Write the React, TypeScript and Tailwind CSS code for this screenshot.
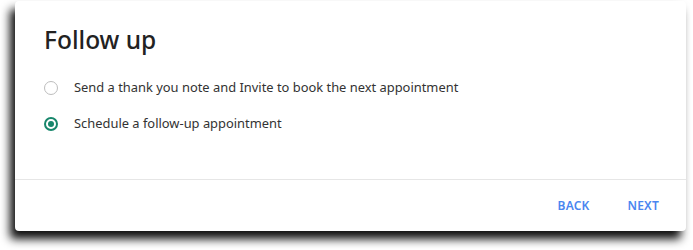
import React from "react";

function Radio({ checked }: { checked: boolean }) {
  return checked ? (
    <span className="flex h-[14px] w-[14px] items-center justify-center rounded-full border-2 border-[#17866b]">
      <span className="h-[6px] w-[6px] rounded-full bg-[#17866b]" />
    </span>
  ) : (
    <span className="h-[14px] w-[14px] rounded-full border-[1.5px] border-[#bdbdbd]" />
  );
}

export default function App() {
  return (
    <div className="h-[250px] w-[693px] overflow-hidden bg-white" style={{ fontFamily: '"Noto Sans", "Open Sans", sans-serif' }}>
      <div className="ml-[15px] mt-[1px] flex h-[230px] w-[671px] flex-col rounded-[4px] bg-white shadow-[-5px_8px_10px_rgba(0,0,0,0.95)]">
        <div className="px-[29px] pt-[23px]">
          <h1 className="text-[24.5px] leading-[32px] font-medium text-[#222]">Follow up</h1>
        </div>
        <div className="mt-[21px] flex flex-col gap-[14px] px-[29px]">
          <label className="flex h-[22px] items-center gap-[16px]">
            <Radio checked={false} />
            <span className="text-[12.9px] text-[#333]">Send a thank you note and Invite to book the next appointment</span>
          </label>
          <label className="flex h-[22px] items-center gap-[16px]">
            <Radio checked={true} />
            <span className="text-[12.9px] text-[#333]">Schedule a follow-up appointment</span>
          </label>
        </div>
        <div className="mt-auto border-t border-[#e6e6e6]">
          <div className="flex h-[51px] items-center justify-end gap-[38px] pr-[27px]">
            <button className="text-[12px] font-semibold tracking-[0.2px] text-[#4a86f0]">BACK</button>
            <button className="text-[12px] font-semibold tracking-[0.2px] text-[#4a86f0]">NEXT</button>
          </div>
        </div>
      </div>
    </div>
  );
}
